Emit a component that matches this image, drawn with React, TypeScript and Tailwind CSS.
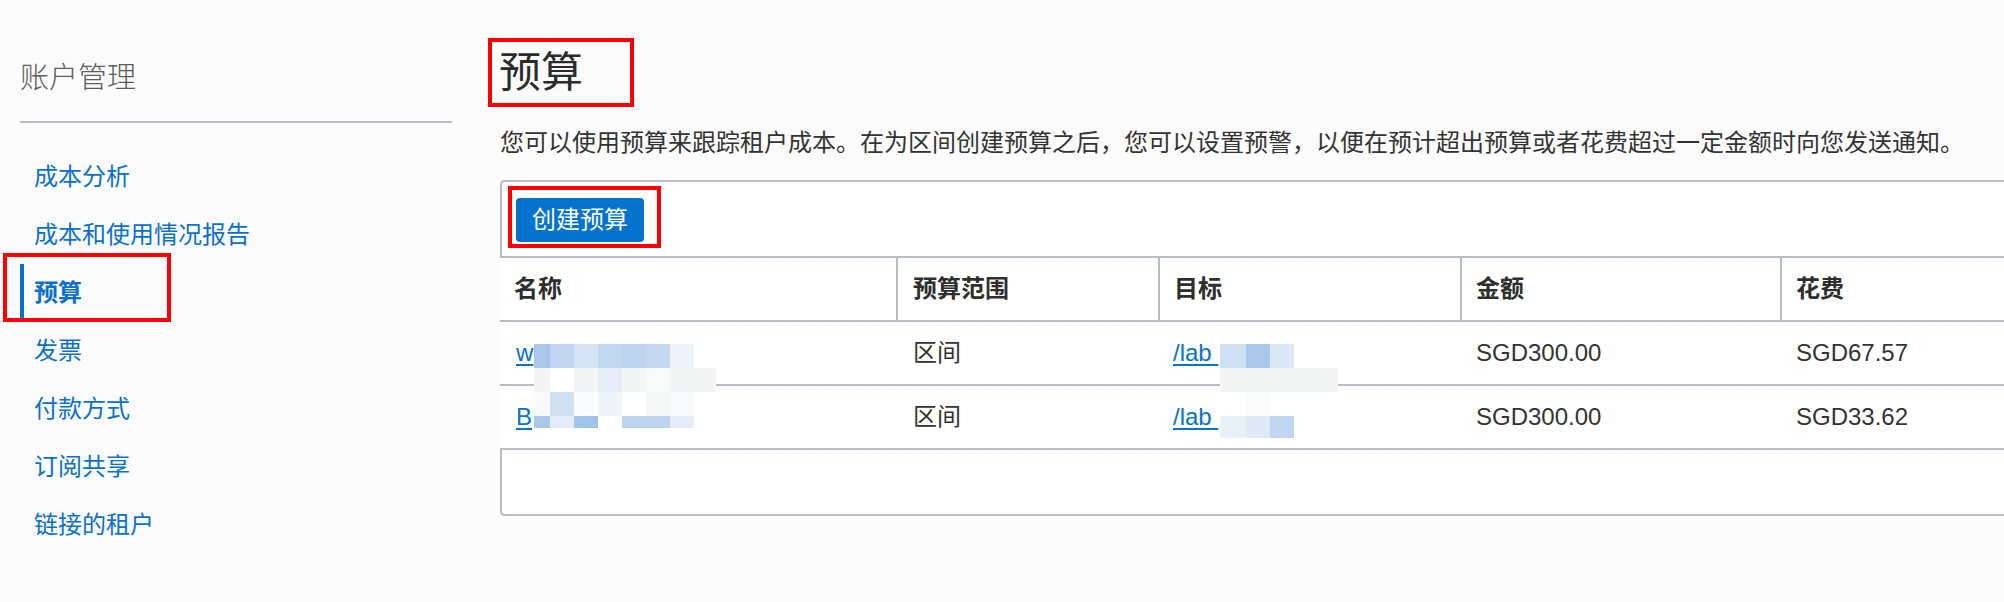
import React from 'react';

const navItems = ['成本分析', '成本和使用情况报告', '预算', '发票', '付款方式', '订阅共享', '链接的租户'];

// redacted (pixelated) blocks over the name and target columns
const nameMosaic = [
  ['h-[24px]', ['w-[16px] bg-[#a7c6ea]', 'w-[24px] bg-[#c0d6f0]', 'w-[24px] bg-[#d6e4f5]', 'w-[24px] bg-[#c2d7f0]', 'w-[24px] bg-[#bcd4ef]', 'w-[24px] bg-[#c4d9f1]', 'w-[24px] bg-[#eef3fb]']],
  ['h-[24px]', ['w-[16px] bg-[#f3f5f4]', 'w-[24px] bg-white', 'w-[24px] bg-[#f4f6f5]', 'w-[24px] bg-[#e6eef9]', 'w-[24px] bg-[#f4f6f5]', 'w-[24px] bg-[#f8f9f9]', 'w-[24px] bg-[#f4f6f5]', 'w-[22px] bg-[#f4f6f5]']],
  ['h-[24px]', ['w-[16px] bg-[#f8fafd]', 'w-[24px] bg-[#d0e0f3]', 'w-[24px] bg-[#f9fbfd]', 'w-[24px] bg-[#f0f4fa]', 'w-[24px] bg-white', 'w-[24px] bg-[#f5f7f6]', 'w-[24px] bg-[#f8f9fb]']],
  ['h-[12px]', ['w-[16px] bg-[#a9c7ea]', 'w-[24px] bg-[#e3ecf8]', 'w-[24px] bg-[#a2c2e9]', 'w-[24px] bg-white', 'w-[24px] bg-[#bdd4ef]', 'w-[24px] bg-[#bdd4ef]', 'w-[24px] bg-[#e4ecf8]']],
] as const;

const targetMosaic = [
  ['h-[24px]', ['w-[26px] bg-[#cfe0f4]', 'w-[24px] bg-[#a9c8ea]', 'w-[24px] bg-[#dce8f6]', 'w-[44px] bg-white']],
  ['h-[24px]', ['w-[118px] bg-[#f4f6f5]']],
  ['h-[24px]', ['w-[26px] bg-white', 'w-[24px] bg-[#fbfbfb]', 'w-[24px] bg-white']],
  ['h-[22px]', ['w-[26px] bg-[#e8f0fa]', 'w-[24px] bg-[#e0eaf7]', 'w-[24px] bg-[#c0d6f0]']],
] as const;

function Mosaic({ rows, className }: { rows: typeof nameMosaic | typeof targetMosaic; className: string }) {
  return (
    <div className={`absolute flex flex-col ${className}`}>
      {rows.map(([h, cells], i) => (
        <div key={i} className={`flex ${h}`}>
          {cells.map((c, j) => (
            <div key={j} className={`h-full ${c}`} />
          ))}
        </div>
      ))}
    </div>
  );
}

const rows = [
  { name: 'w', target: '/lab\u00a0', amount: 'SGD300.00', spent: 'SGD67.57' },
  { name: 'B', target: '/lab\u00a0', amount: 'SGD300.00', spent: 'SGD33.62' },
];

const grid = 'grid grid-cols-[396px_262px_302px_320px_520px]';

export default function App() {
  return (
    <div className="flex h-[602px] w-full overflow-hidden bg-[#fbfbfb] font-['Liberation_Sans','Noto_Sans_CJK_SC',sans-serif] text-[24px] leading-[24px] text-[#333]">
      {/* Sidebar */}
      <aside className="ml-[20px] w-[432px] shrink-0 pt-[61px]">
        <h2 className="font-['Noto_Sans_CJK_SC_Light','Noto_Sans_CJK_SC',sans-serif] text-[29px] leading-[29px] font-light text-[#5c5c5c]">
          账户管理
        </h2>
        <div className="mt-[31px] h-[2px] bg-[#b9bdc4]" />
        <nav className="mt-[25px]">
          {navItems.map((item, i) => {
            const active = i === 2;
            return (
              <div key={item} className="relative flex h-[58px]">
                <div className={`h-[55px] w-[4px] ${active ? 'bg-[#0572ce]' : ''}`} />
                <span className={`ml-[10px] self-center text-[#0a70cc] ${active ? 'font-bold' : ''}`}>{item}</span>
                {active && (
                  <div className="pointer-events-none absolute -left-[17px] -top-[11px] h-[69px] w-[168px] border-4 border-[#ff0000]" />
                )}
              </div>
            );
          })}
        </nav>
      </aside>

      {/* Main */}
      <main className="ml-[48px] min-w-0 flex-1 pt-[38px]">
        <div className="-ml-[12px] h-[69px] w-[146px] border-4 border-[#ff0000] pl-[7px] pt-[10px]">
          <h1 className="text-[42px] leading-[42px] text-[#2b2b2b]">预算</h1>
        </div>
        <p className="mt-[24px] whitespace-nowrap">
          您可以使用预算来跟踪租户成本。在为区间创建预算之后，您可以设置预警，以便在预计超出预算或者花费超过一定金额时向您发送通知。
        </p>

        <section className="relative mt-[25px] w-[1800px] bg-white">
          <div className="rounded-t-[4px] border-2 border-[#b9bdc4] pb-[8px]">
            <div className="ml-[6px] mt-[4px] inline-block border-4 border-[#ff0000] pb-[2px] pl-[4px] pr-[13px] pt-[8px]">
              <button className="h-[44px] w-[128px] rounded-[4px] bg-[#0572ce] text-white">创建预算</button>
            </div>
          </div>

          <div className={`${grid} h-[64px] border-b-2 border-[#b9bdc4] font-bold text-[#2e2e2e]`}>
            <div className="flex items-center pl-[14px]">名称</div>
            <div className="flex items-center border-l-2 border-[#b9bdc4] pl-[15px]">预算范围</div>
            <div className="flex items-center border-l-2 border-[#b9bdc4] pl-[14px]">目标</div>
            <div className="flex items-center border-l-2 border-[#b9bdc4] pl-[14px]">金额</div>
            <div className="flex items-center border-l-2 border-[#b9bdc4] pl-[14px]">花费</div>
          </div>

          {rows.map((r, i) => (
            <div key={i} className={`${grid} h-[64px] border-b-2 border-[#b9bdc4]`}>
              <div className="flex items-center pl-[16px]">
                <a className="text-[#0572ce] underline underline-offset-[3px]">{r.name}</a>
              </div>
              <div className="flex items-center pl-[17px]">区间</div>
              <div className="flex items-center pl-[15px]">
                <a className="text-[#0572ce] underline underline-offset-[3px]">{r.target}</a>
              </div>
              <div className="flex items-center pl-[16px]">{r.amount}</div>
              <div className="flex items-center pl-[16px]">{r.spent}</div>
            </div>
          ))}

          <div className="h-[66px] rounded-b-[4px] border-2 border-t-0 border-[#b9bdc4]" />

          <Mosaic rows={nameMosaic} className="left-[34px] top-[164px]" />
          <Mosaic rows={targetMosaic} className="left-[720px] top-[164px]" />
        </section>
      </main>
    </div>
  );
}
